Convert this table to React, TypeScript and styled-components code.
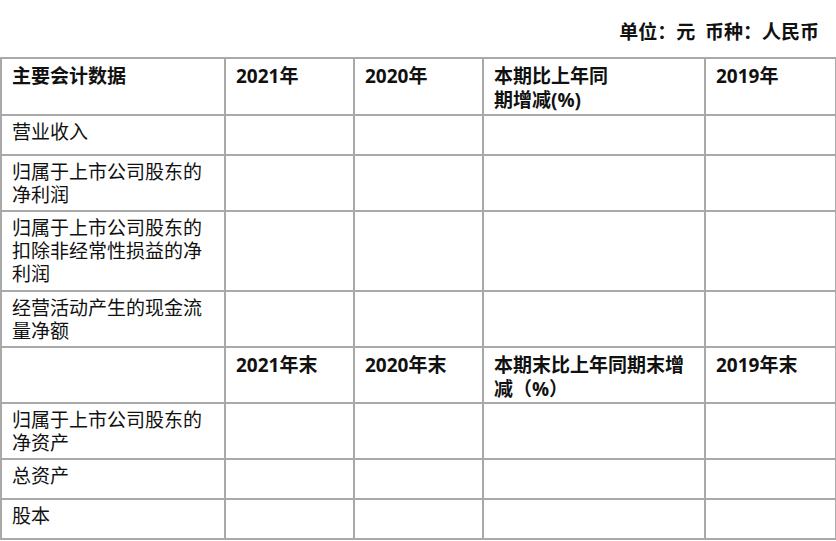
import React from "react";
import styled, { createGlobalStyle } from "styled-components";

const GlobalStyle = createGlobalStyle`
	html, body {
		margin: 0;
		padding: 0;
		background: #fff;
	}
	body {
		font-family: "Open Sans", "Noto Sans CJK SC", sans-serif;
		color: #111;
	}
`;

const Page = styled.div`
	width: 836px;
	height: 541px;
	overflow: hidden;
`;

const Caption = styled.div`
	height: 57px;
	display: flex;
	align-items: center;
	justify-content: flex-end;
	padding-right: 17px;
	padding-top: 4px;
	box-sizing: border-box;
	font-size: 19px;
	font-weight: 700;
	white-space: pre;
`;

const Table = styled.table`
	width: 835px;
	border-collapse: collapse;
	table-layout: fixed;
	font-size: 19px;
	line-height: 23px;
`;

const Row = styled.tr<{ $h: number }>`
	height: ${(p) => p.$h}px;
`;

const Cell = styled.td<{ $bold?: boolean }>`
	border: 2px solid #a9a9a9;
	padding: ${(p) => (p.$bold ? "5px 10px 0" : "5px 10px 2px")};
	vertical-align: top;
	font-weight: ${(p) => (p.$bold ? 700 : 400)};
	line-height: ${(p) => (p.$bold ? "24px" : "23px")};
	box-sizing: border-box;
`;

type Line = { label: React.ReactNode; h: number };

const yearHead = ["2021年", "2020年", <>本期比上年同<br />期增减(%)</>, "2019年"];
const endHead = ["2021年末", "2020年末", <>本期末比上年同期末增<br />减（%）</>, "2019年末"];

const flowRows: Line[] = [
	{ label: "营业收入", h: 40 },
	{ label: "归属于上市公司股东的净利润", h: 56 },
	{ label: "归属于上市公司股东的扣除非经常性损益的净利润", h: 80 },
	{ label: "经营活动产生的现金流量净额", h: 56 },
];

const stockRows: Line[] = [
	{ label: "归属于上市公司股东的净资产", h: 56 },
	{ label: "总资产", h: 40 },
	{ label: "股本", h: 40 },
];

function DataRow({ label, h }: Line) {
	return (
		<Row $h={h}>
			<Cell>{label}</Cell>
			<Cell />
			<Cell />
			<Cell />
			<Cell />
		</Row>
	);
}

function HeadRow({ first, cols, h }: { first: string; cols: React.ReactNode[]; h: number }) {
	return (
		<Row $h={h}>
			<Cell $bold>{first}</Cell>
			{cols.map((c, i) => (
				<Cell $bold key={i}>
					{c}
				</Cell>
			))}
		</Row>
	);
}

export default function App() {
	return (
		<Page>
			<GlobalStyle />
			<Caption>{"单位：元  币种：人民币"}</Caption>
			<Table>
				<colgroup>
					<col style={{ width: 224 }} />
					<col style={{ width: 129 }} />
					<col style={{ width: 129 }} />
					<col style={{ width: 222 }} />
					<col style={{ width: 131 }} />
				</colgroup>
				<tbody>
					<HeadRow first="主要会计数据" cols={yearHead} h={57} />
					{flowRows.map((r, i) => (
						<DataRow key={i} {...r} />
					))}
					<HeadRow first="" cols={endHead} h={56} />
					{stockRows.map((r, i) => (
						<DataRow key={i} {...r} />
					))}
				</tbody>
			</Table>
		</Page>
	);
}
